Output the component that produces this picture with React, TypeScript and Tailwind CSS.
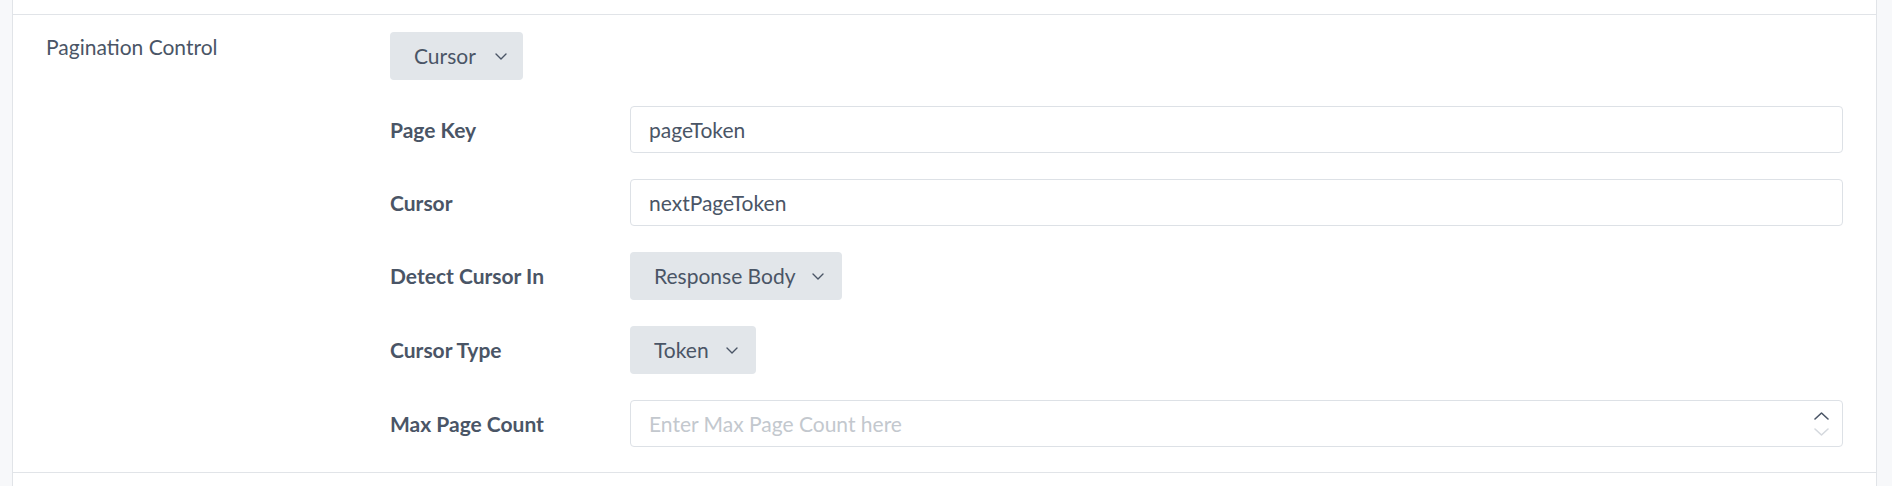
import React from "react";

const font = { fontFamily: "Lato, 'Open Sans', sans-serif" };

function Chevron({ className = "" }: { className?: string }) {
  return (
    <svg width="12" height="7" viewBox="0 0 12 7" fill="none" className={className}>
      <path d="M1 1l5 5 5-5" stroke="currentColor" strokeWidth="1.4" strokeLinecap="round" strokeLinejoin="round" />
    </svg>
  );
}

function Select({ value, width, pr }: { value: string; width: string; pr: string }) {
  return (
    <button
      className={`${width} ${pr} h-[48px] flex items-center justify-between pl-[24px] rounded-[4px] bg-[#e2e6ea] text-[#4a5566] text-[21px]`}
    >
      <span>{value}</span>
      <Chevron />
    </button>
  );
}

function TextInput({ value }: { value: string }) {
  return (
    <div className="h-[47px] w-full flex items-center px-[18px] border border-[#dde1e6] rounded-[4px] text-[21px] text-[#4a5566] bg-white">
      {value}
    </div>
  );
}

function NumberInput({ placeholder }: { placeholder: string }) {
  return (
    <div className="h-[47px] w-full flex items-center justify-between pl-[18px] pr-[13px] border border-[#dde1e6] rounded-[4px] text-[21px] bg-white">
      <span className="text-[#c3c8ce]">{placeholder}</span>
      <div className="flex flex-col gap-[8px]">
        <svg width="15" height="8" viewBox="0 0 15 8" fill="none">
          <path d="M1 7l6.5-6 6.5 6" stroke="#4a5566" strokeWidth="1.6" strokeLinecap="round" strokeLinejoin="round" />
        </svg>
        <svg width="15" height="8" viewBox="0 0 15 8" fill="none">
          <path d="M1 1l6.5 6 6.5-6" stroke="#d5d9de" strokeWidth="1.6" strokeLinecap="round" strokeLinejoin="round" />
        </svg>
      </div>
    </div>
  );
}

function Field({ label, children }: { label: string; children: React.ReactNode }) {
  return (
    <div className="flex items-center">
      <div className="w-[240px] shrink-0 text-[21px] font-bold text-[#4a5566]">{label}</div>
      <div className="flex-1 flex">{children}</div>
    </div>
  );
}

export default function App() {
  return (
    <div className="w-[1892px] h-[486px] bg-[#f7f8fa] pl-[12px] pr-[15px] overflow-hidden" style={font}>
      <div className="h-full bg-white border-x border-[#e1e4e8]">
        <div className="h-[14px]" />
        <div className="flex border-y border-[#e1e4e8] pl-[33px] pr-[33px] pt-[17px] pb-[25px]">
          <div className="w-[344px] shrink-0 text-[21px] leading-[28px] pt-[1px] text-[#4a5566]">Pagination Control</div>
          <div className="flex-1 flex flex-col gap-[26px]">
            <div className="flex">
              <Select value="Cursor" width="w-[133px]" pr="pr-[16px]" />
            </div>
            <Field label="Page Key">
              <TextInput value="pageToken" />
            </Field>
            <Field label="Cursor">
              <TextInput value="nextPageToken" />
            </Field>
            <Field label="Detect Cursor In">
              <Select value="Response Body" width="w-[212px]" pr="pr-[18px]" />
            </Field>
            <Field label="Cursor Type">
              <Select value="Token" width="w-[126px]" pr="pr-[18px]" />
            </Field>
            <Field label="Max Page Count">
              <NumberInput placeholder="Enter Max Page Count here" />
            </Field>
          </div>
        </div>
      </div>
    </div>
  );
}
